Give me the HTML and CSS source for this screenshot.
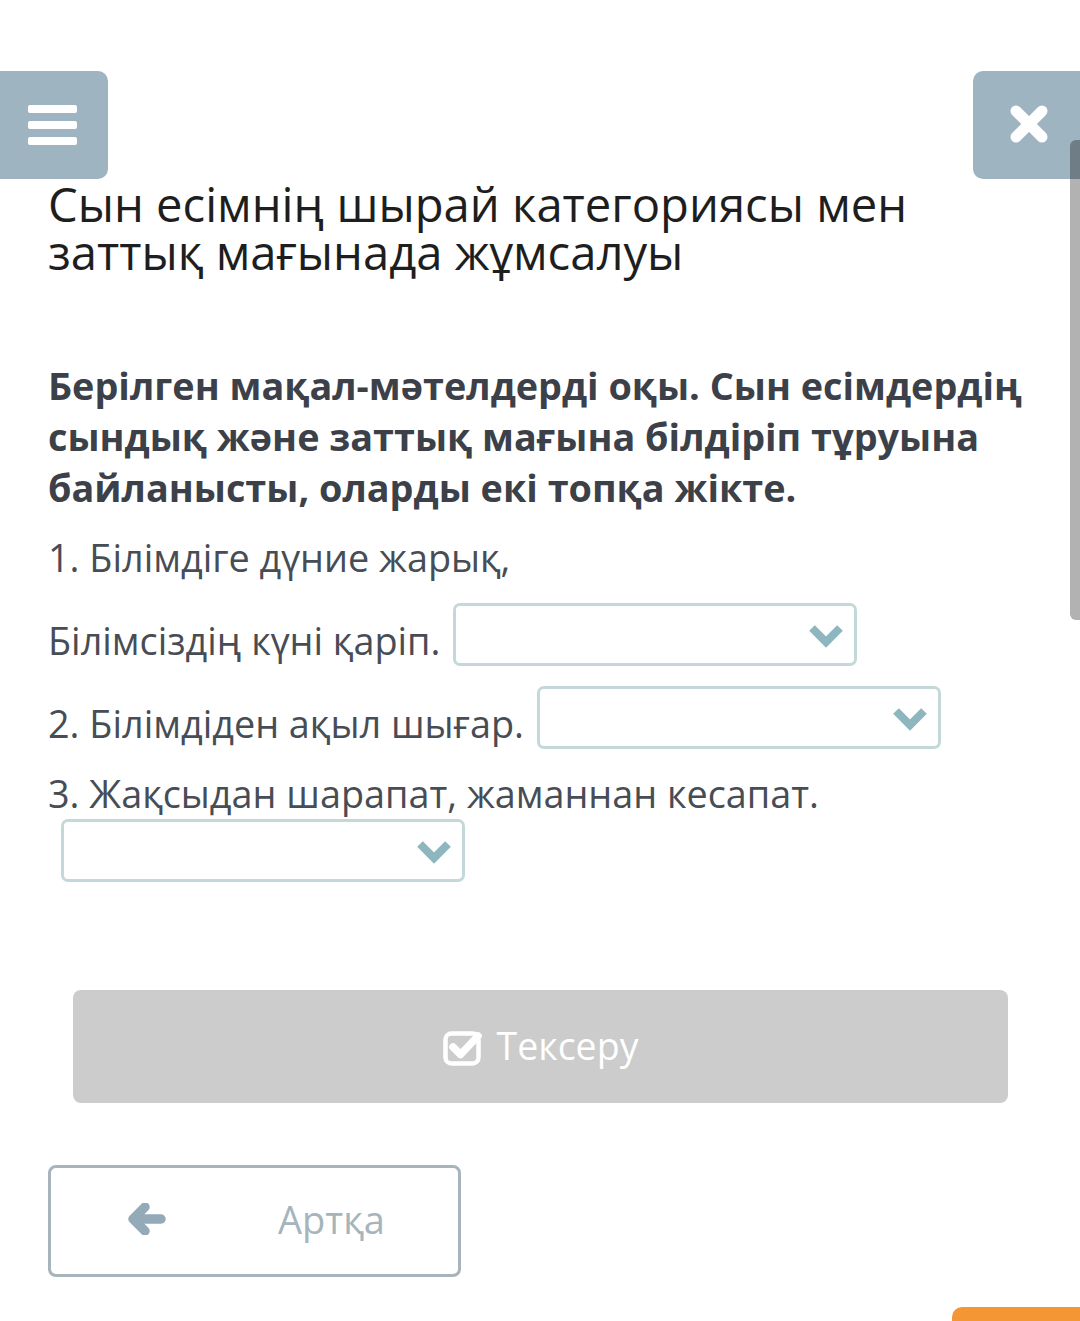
FILE: index.html
```html
<!DOCTYPE html>
<html lang="kk">
<head>
<meta charset="utf-8">
<title>Сын есім</title>
<link rel="stylesheet" href="styles.css">
</head>
<body>
<div class="page">
  <header class="topbar">
    <button class="tbtn menu" aria-label="Мәзір">
      <span class="bar"></span><span class="bar"></span><span class="bar"></span>
    </button>
    <button class="tbtn close" aria-label="Жабу">
      <svg width="40" height="40" viewBox="0 0 40 40"><path d="M7 7 L33 33 M33 7 L7 33" stroke="#fff" stroke-width="11" stroke-linecap="round"/></svg>
    </button>
  </header>

  <h1 class="title">Сын есімнің шырай категориясы мен заттық мағынада жұмсалуы</h1>

  <p class="task">Берілген мақал-мәтелдерді оқы. Сын есімдердің сындық және заттық мағына білдіріп тұруына байланысты, оларды екі топқа жікте.</p>

  <div class="row"><span class="txt">1. Білімдіге дүние жарық,</span></div>
  <div class="row"><span class="txt">Білімсіздің күні қаріп.</span><div class="select"><svg class="chev" width="36" height="24" viewBox="0 0 36 24"><path d="M4 4 L18 18 L32 4" fill="none" stroke="#8db6bf" stroke-width="8" stroke-linejoin="miter"/></svg></div></div>
  <div class="row"><span class="txt">2. Білімдіден ақыл шығар.</span><div class="select"><svg class="chev" width="36" height="24" viewBox="0 0 36 24"><path d="M4 4 L18 18 L32 4" fill="none" stroke="#8db6bf" stroke-width="8" stroke-linejoin="miter"/></svg></div></div>
  <div class="row"><span class="txt">3. Жақсыдан шарапат, жаманнан кесапат.</span><div class="select"><svg class="chev" width="36" height="24" viewBox="0 0 36 24"><path d="M4 4 L18 18 L32 4" fill="none" stroke="#8db6bf" stroke-width="8" stroke-linejoin="miter"/></svg></div></div>

  <button class="check">
    <svg width="42" height="38" viewBox="0 0 42 38"><rect x="2.5" y="5.5" width="33" height="30" rx="6" fill="none" stroke="#fff" stroke-width="4.5"/><path d="M10 19 L17.5 26.5 L35 8" fill="none" stroke="#fff" stroke-width="7.5" stroke-linecap="round" stroke-linejoin="round"/></svg>
    <span>Тексеру</span>
  </button>

  <button class="back">
    <svg class="arrow" width="38" height="32" viewBox="0 0 38 32"><path d="M17 4 L5 16 L17 28 M7 16 L33 16" fill="none" stroke="#95aab8" stroke-width="9.5" stroke-linecap="round" stroke-linejoin="round"/></svg>
    <span>Артқа</span>
  </button>
</div>
<div class="scrollbar"></div>
<div class="next"></div>
</body>
</html>
```
FILE: styles.css
```css
* { box-sizing: border-box; }
html, body { margin: 0; padding: 0; background: #fff; }
body {
  width: 1080px;
  height: 1321px;
  overflow: hidden;
  position: relative;
  font-family: "Open Sans", "Noto Sans", sans-serif;
}
.page { padding: 71px 0 0 0; }

.topbar {
  display: flex;
  justify-content: space-between;
  height: 108px;
}
.tbtn {
  border: 0;
  background: #9eb4c1;
  height: 108px;
  width: 108px;
  padding: 0;
  display: flex;
  align-items: center;
  justify-content: center;
  cursor: pointer;
}
.menu {
  border-radius: 0 10px 10px 0;
  flex-direction: column;
  gap: 8px;
  padding-right: 4px;
}
.menu .bar {
  display: block;
  width: 49px;
  height: 8px;
  border-radius: 2px;
  background: #fff;
}
.close {
  width: 107px;
  border-radius: 10px 0 0 10px;
  padding-left: 4px;
  padding-bottom: 2px;
}

.title {
  margin: 1px 48px 0 48px;
  font-size: 47.2px;
  line-height: 48px;
  font-weight: 400;
  color: #1e1e1e;
}

.task {
  margin: 84px 48px 20px 48px;
  font-size: 37.8px;
  line-height: 51px;
  font-weight: 700;
  color: #3c4149;
}

.row {
  display: flex;
  flex-wrap: wrap;
  align-items: flex-end;
  margin: 0 48px 20px 48px;
  font-size: 37.8px;
  line-height: 50px;
  color: #474d55;
}
.select {
  margin-left: 13px;
  width: 404px;
  height: 63px;
  border: 3px solid #c4d8da;
  border-radius: 7px;
  display: flex;
  align-items: center;
  justify-content: flex-end;
  padding-right: 10px;
  background: #fff;
}
.chev { margin-top: 2px; }

.check {
  display: flex;
  align-items: center;
  justify-content: center;
  gap: 12px;
  margin: 108px 72px 0 73px;
  width: 935px;
  height: 113px;
  border: 0;
  border-radius: 8px;
  background: #cccccc;
  color: #fff;
  font-family: "Open Sans", "Noto Sans", sans-serif;
  font-size: 37.5px;
  padding: 0 0 2px 0;
}
.check svg { margin-top: 2px; }

.back {
  display: flex;
  align-items: center;
  margin: 62px 0 0 48px;
  width: 413px;
  height: 112px;
  border: 3px solid #a8b4bb;
  border-radius: 8px;
  background: #fff;
  color: #a6b4bc;
  font-family: "Open Sans", "Noto Sans", sans-serif;
  font-size: 38px;
  padding: 0 0 4px 77px;
}
.back .arrow { margin-right: 112px; }

.scrollbar {
  position: absolute;
  right: 0;
  top: 140px;
  width: 10px;
  height: 480px;
  background: rgba(0, 0, 0, 0.3);
  border-radius: 6px 0 0 6px;
}
.next {
  position: absolute;
  left: 952px;
  top: 1307px;
  width: 140px;
  height: 40px;
  background: #f39633;
  border-radius: 10px;
}
```
